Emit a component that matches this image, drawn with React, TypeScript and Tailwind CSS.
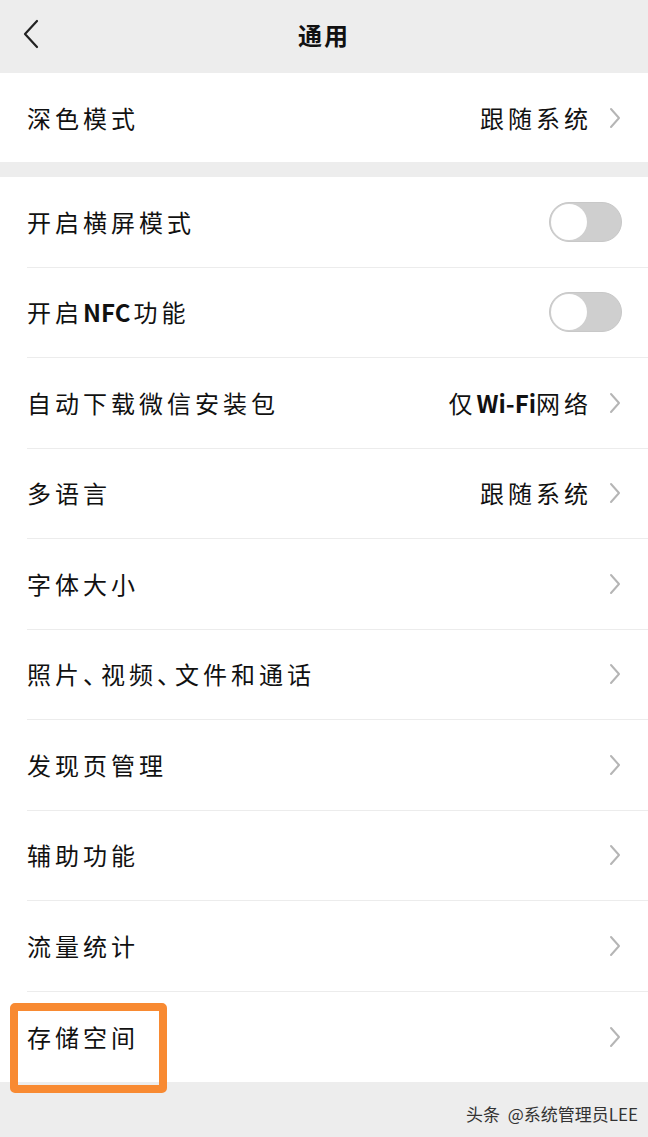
import React from "react";

const font = { fontFamily: '"Noto Sans CJK SC", "Noto Sans", sans-serif' };

const Chevron = () => (
  <svg width="14" height="24" viewBox="0 0 14 24" className="ml-[16px] shrink-0">
    <path d="M3 3 L11 12 L3 21" fill="none" stroke="#b5b5b5" strokeWidth="2" strokeLinecap="round" strokeLinejoin="round" />
  </svg>
);

const Toggle = () => (
  <div className="w-[73px] h-[40px] rounded-full bg-[#cfcfcf] border border-[#c8c8c8] flex items-center px-[1px]">
    <div className="w-[36px] h-[36px] rounded-full bg-white" />
  </div>
);

// narrow ideographic comma, as the phone renders it
const Dun = () => <span className="tracking-[-6px]">、</span>;

const Row = ({
  label,
  value,
  toggle,
  last,
  height = "h-[90.5px]",
}: {
  label: React.ReactNode;
  value?: React.ReactNode;
  toggle?: boolean;
  last?: boolean;
  height?: string;
}) => (
  <div className="pl-[27px] bg-white">
    <div className={`${height} flex items-center pr-[26px] ${last ? "" : "border-b border-[#ececec]"}`}>
      <div className="flex-1 text-[24px] tracking-[4px] text-[#111] whitespace-nowrap">{label}</div>
      {toggle ? (
        <Toggle />
      ) : (
        <>
          {value && <div className="text-[24px] tracking-[4px] text-[#111] whitespace-nowrap">{value}</div>}
          <Chevron />
        </>
      )}
    </div>
  </div>
);

export default function App() {
  return (
    <div className="w-[648px] h-[1137px] bg-[#ededed] relative overflow-hidden" style={font}>
      {/* header */}
      <div className="h-[73px] flex items-center justify-center relative">
        <svg width="20" height="30" viewBox="0 0 20 30" className="absolute left-[21px] top-[19px]">
          <path d="M16 2 L4 15 L16 28" fill="none" stroke="#222" strokeWidth="2.2" strokeLinecap="round" strokeLinejoin="round" />
        </svg>
        <div className="text-[24px] font-bold tracking-[2px] text-[#111] -mt-[4px]">通用</div>
      </div>

      <Row label="深色模式" value="跟随系统" last height="h-[89px]" />

      <div className="h-[15px]" />

      <Row label="开启横屏模式" toggle />
      <Row
        label={
          <span>
            开启<span className="font-bold tracking-[0px] mr-[3px]">NFC</span>功能
          </span>
        }
        toggle
      />
      <Row
        label="自动下载微信安装包"
        value={
          <span>
            仅<span className="font-bold tracking-[0px]">Wi-Fi</span>网络
          </span>
        }
      />
      <Row label="多语言" value="跟随系统" />
      <Row label="字体大小" />
      <Row
        label={
          <span>
            照片<Dun />视频<Dun />文件和通话
          </span>
        }
      />
      <Row label="发现页管理" />
      <Row label="辅助功能" />
      <Row label="流量统计" />
      <Row label="存储空间" last />

      <div className="flex justify-end pr-[10px] pt-[19px]">
        <span className="text-[17px] text-[#333] whitespace-pre">头条  @系统管理员LEE</span>
      </div>

      {/* highlight box */}
      <div className="absolute left-[10px] top-[1003px] w-[157px] h-[90px] border-[8px] border-[#f88a32] rounded-[5px]" />
    </div>
  );
}
